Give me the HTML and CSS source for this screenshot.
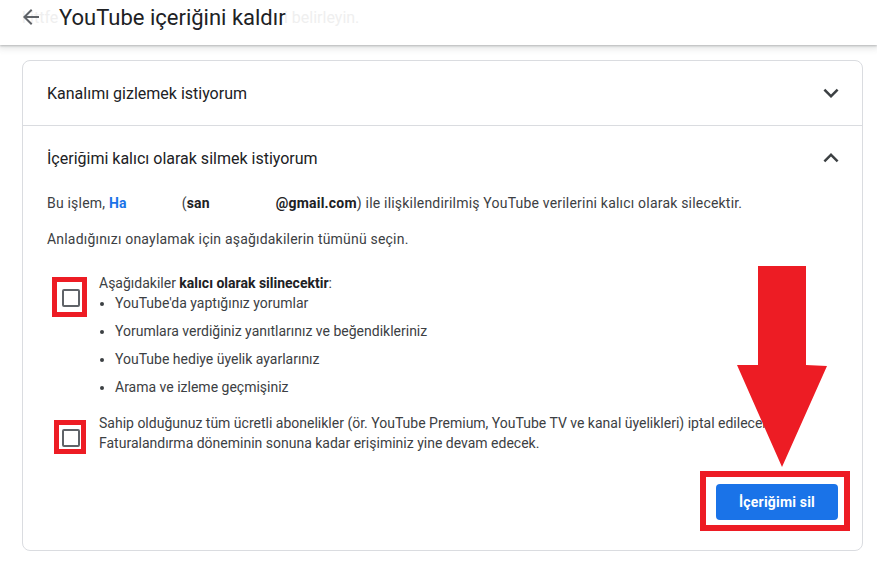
FILE: index.html
```html
<!DOCTYPE html>
<html lang="tr">
<head>
  <meta charset="UTF-8" />
  <meta name="viewport" content="width=device-width, initial-scale=1.0"/>
  <title>YouTube içeriğini kaldır</title>
  <link rel="stylesheet" href="styles.css">
</head>
<body>

  <header class="topbar">
    <span class="ghost ghost-left">kittfe</span>
    <span class="ghost ghost-right">i belirleyin.</span>
    <svg class="back" viewBox="0 0 24 24" width="24" height="24"><path d="M20 11H7.83l5.59-5.59L12 4l-8 8 8 8 1.41-1.41L7.83 13H20v-2z"/></svg>
    <h1 class="title">YouTube içeriğini kaldır</h1>
  </header>

  <div class="card">
    <div class="row-head">
      <span>Kanalımı gizlemek istiyorum</span>
      <svg class="chev" viewBox="0 0 24 24" width="30" height="30"><path d="M16.59 8.59L12 13.17 7.41 8.59 6 10l6 6 6-6z"/></svg>
    </div>

    <div class="section">
      <div class="row-head">
        <span>İçeriğimi kalıcı olarak silmek istiyorum</span>
        <svg class="chev" viewBox="0 0 24 24" width="30" height="30"><path d="M12 8l-6 6 1.41 1.41L12 10.83l4.59 4.58L18 14z"/></svg>
      </div>

      <div class="section-body">
        <p class="line">Bu işlem, <b class="name">Ha</b><span class="gap gap-name"></span>(<b>san</b><span class="gap gap-mail"></span><b>@gmail.com</b>) ile ilişkilendirilmiş YouTube verilerini kalıcı olarak silecektir.</p>
        <p class="line spaced">Anladığınızı onaylamak için aşağıdakilerin tümünü seçin.</p>

        <div class="check-row first">
          <div class="check-wrap">
            <span class="box"></span>
            <span class="mark mark-one"></span>
          </div>
          <div class="check-text">
            Aşağıdakiler <b>kalıcı olarak silinecektir</b>:
            <ul class="list">
              <li>YouTube'da yaptığınız yorumlar</li>
              <li>Yorumlara verdiğiniz yanıtlarınız ve beğendikleriniz</li>
              <li>YouTube hediye üyelik ayarlarınız</li>
              <li>Arama ve izleme geçmişiniz</li>
            </ul>
          </div>
        </div>

        <div class="check-row second">
          <div class="check-wrap">
            <span class="box"></span>
            <span class="mark mark-two"></span>
          </div>
          <div class="check-text">
            Sahip olduğunuz tüm ücretli abonelikler (ör. YouTube Premium, YouTube TV ve kanal üyelikleri) iptal edilecek.<br>
            Faturalandırma döneminin sonuna kadar erişiminiz yine devam edecek.
          </div>
        </div>

        <div class="actions">
          <span class="btn-wrap">
            <button class="btn">İçeriğimi sil</button>
            <span class="mark mark-btn"></span>
          </span>
        </div>
      </div>
    </div>
  </div>

  <!-- red annotation arrow -->
  <svg class="arrow" viewBox="0 0 94 206" width="94" height="206">
    <polygon points="23,2 71,2 71,101 92,102 47,203 2,101 23,101" />
  </svg>

</body>
</html>
```

FILE: styles.css
```css
body {
  margin: 0;
  font-family: Roboto, 'Liberation Sans', sans-serif;
  background: #fff;
  color: #3c4043;
  position: relative;
}

.topbar {
  position: relative;
  height: 45px;
  display: flex;
  align-items: flex-start;
  background: #fff;
  box-shadow: 0 1px 2px rgba(60,64,67,0.3), 0 2px 6px 2px rgba(60,64,67,0.12);
  overflow: hidden;
  z-index: 1;
}

/* faded text of the page scrolling under the bar */
.ghost {
  position: absolute;
  top: 8px;
  font-size: 16px;
  line-height: 20px;
  color: #efefef;
  white-space: nowrap;
}

.ghost-left {
  left: 22px;
}

.ghost-right {
  left: 284px;
}

.back {
  fill: #5f6368;
  margin: 5px 0 0 19px;
  position: relative;
}

.title {
  position: relative;
  margin: 4px 0 0 16px;
  font-size: 22px;
  line-height: 28px;
  font-weight: 400;
  color: #202124;
}

.card {
  margin: 15px 0 0 22px;
  width: 841px;
  box-sizing: border-box;
  border: 1px solid #dadce0;
  border-radius: 8px;
}

.row-head {
  height: 64px;
  display: flex;
  align-items: center;
  justify-content: space-between;
  padding: 0 16px 0 24px;
  font-size: 16px;
  color: #202124;
}

.chev {
  fill: #3c4043;
}

.section {
  border-top: 1px solid #dadce0;
}

.section-body {
  padding: 3px 24px 30px 24px;
  font-size: 14px;
  line-height: 20px;
}

.line {
  margin: 0;
  letter-spacing: 0.2px;
}

.line.spaced {
  margin-top: 16px;
}

.line b {
  color: #202124;
}

.line .name {
  color: #1a73e8;
}

.gap {
  display: inline-block;
}

.gap-name {
  width: 55px;
}

.gap-mail {
  width: 66px;
}

.check-row {
  display: flex;
  padding-left: 15px;
}

.check-row.first {
  margin-top: 24px;
}

.check-row.second {
  margin-top: 16px;
}

.check-wrap {
  position: relative;
  width: 18px;
  height: 18px;
  margin-top: 16px;
  margin-right: 19px;
  flex-shrink: 0;
}

.box {
  display: block;
  width: 18px;
  height: 18px;
  box-sizing: border-box;
  border: 2px solid #5f6368;
  border-radius: 2px;
}

.check-text {
  color: #3c4043;
}

.check-text b {
  color: #202124;
}

.list {
  margin: 0;
  padding-left: 16px;
}

.list li + li {
  margin-top: 8px;
}

.mark {
  position: absolute;
  box-sizing: border-box;
  border: 5px solid #ed1c24;
}

.mark-one {
  left: -10px;
  top: -12px;
  width: 35px;
  height: 40px;
}

.mark-two {
  left: -8px;
  top: -9px;
  width: 32px;
  height: 34px;
}

.actions {
  display: flex;
  justify-content: flex-end;
  margin-top: 31px;
}

.btn-wrap {
  position: relative;
  display: inline-block;
}

.btn {
  display: block;
  height: 36px;
  padding: 0 23px;
  background-color: #1a73e8;
  color: white;
  border: none;
  border-radius: 4px;
  font-family: Roboto, 'Liberation Sans', sans-serif;
  font-size: 14px;
  font-weight: bold;
  letter-spacing: 0.2px;
}

.mark-btn {
  left: -16px;
  top: -13px;
  right: -12px;
  bottom: -11px;
  border-width: 6px;
}

.arrow {
  position: absolute;
  left: 735px;
  top: 264px;
  fill: #ed1c24;
  z-index: 2;
}
```
